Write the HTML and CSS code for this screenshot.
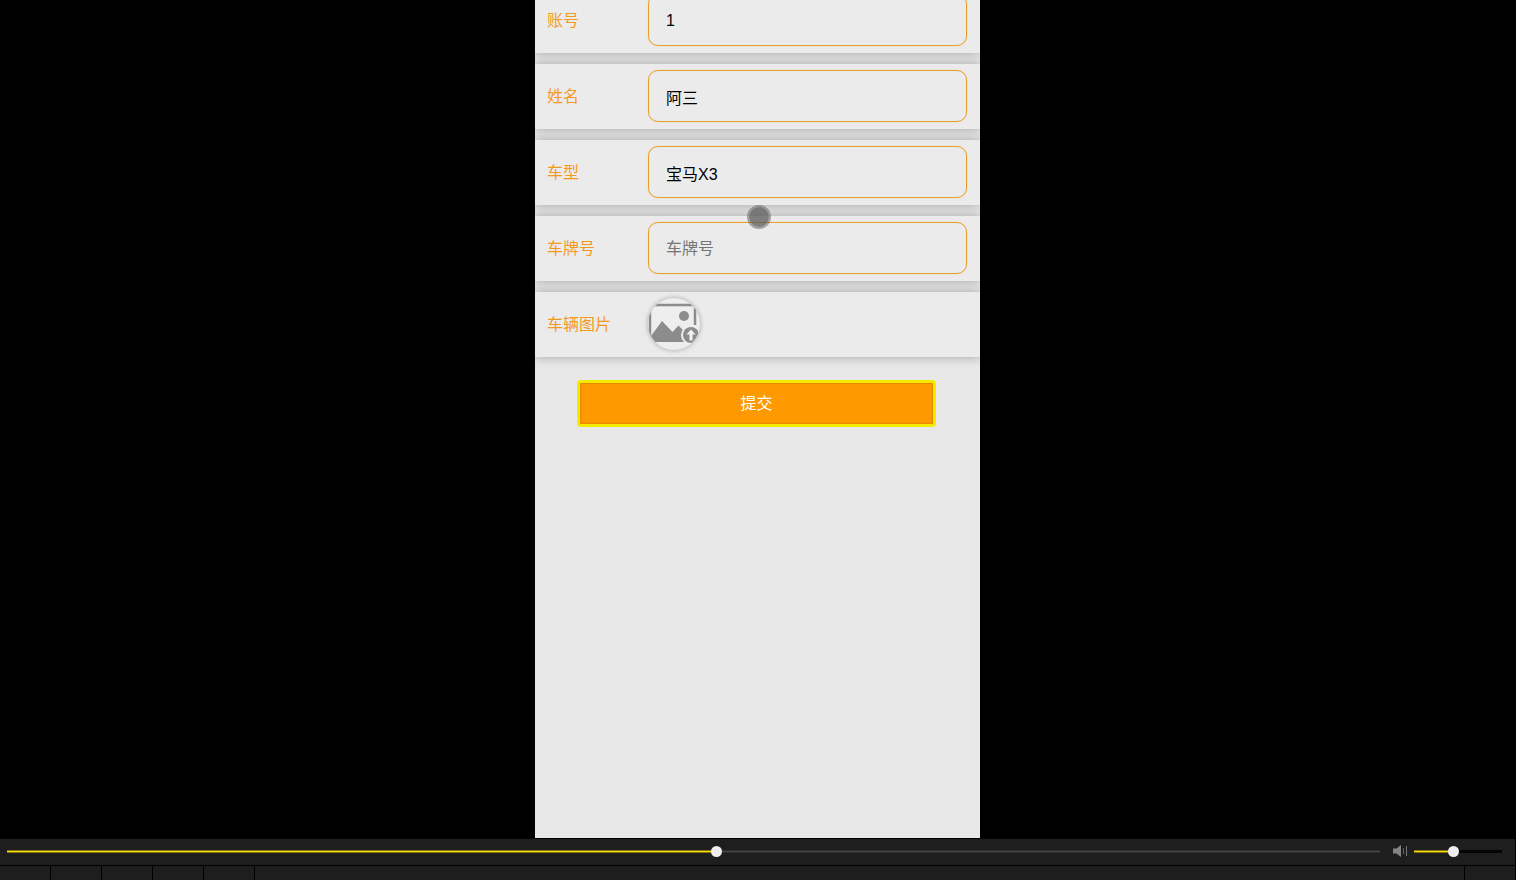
FILE: index.html
```html
<!DOCTYPE html>
<html lang="zh-CN">
<head>
<meta charset="utf-8">
<meta name="viewport" content="width=device-width, initial-scale=1">
<title>车辆信息</title>
<link rel="stylesheet" href="styles.css">
</head>
<body>
<main class="stage">
  <div class="phone">
    <form class="form">
      <div class="row">
        <label class="label" for="account">账号</label>
        <input class="field" id="account" type="text" value="1">
      </div>
      <div class="row">
        <label class="label" for="name">姓名</label>
        <input class="field" id="name" type="text" value="阿三">
      </div>
      <div class="row">
        <label class="label" for="model">车型</label>
        <input class="field" id="model" type="text" value="宝马X3">
      </div>
      <div class="row">
        <label class="label" for="plate">车牌号</label>
        <input class="field" id="plate" type="text" placeholder="车牌号">
      </div>
      <div class="row">
        <span class="label" id="photo-label">车辆图片</span>
        <button class="upload" type="button" aria-labelledby="photo-label">
          <svg class="upload-icon" viewBox="0 0 52 52" aria-hidden="true">
            <path d="M1 7h46v37H1z" fill="#eeeeee"/>
            <path d="M2 40V9q0-2 2-2h41q2 0 2 2v18" fill="none" stroke="#8c8c8c" stroke-width="2.500"/>
            <path d="M0 44V38h3L14 23 24.500 34l6-6.500 6 6v10.500z" fill="#8c8c8c"/>
            <circle cx="36" cy="18" r="5" fill="#8c8c8c"/>
            <circle cx="43" cy="37" r="10" fill="#eeeeee"/>
            <circle cx="43" cy="37" r="8" fill="#8c8c8c"/>
            <path d="M43 31.500l4.500 5h-3v6h-3v-6h-3z" fill="#f2f2f2"/>
          </svg>
        </button>
      </div>
      <button class="submit" type="button">提交</button>
    </form>
    <span class="touch"></span>
  </div>
</main>
<footer class="player">
  <div class="controls">
    <input class="slider seek" type="range" min="0" max="1000" value="517" aria-label="播放进度">
    <svg class="speaker" viewBox="0 0 16 14" aria-hidden="true">
      <path d="M1 4.500h3.500L9 1v12L4.500 9.500H1z" fill="#848484"/>
      <path d="M11.500 4v6" stroke="#606060"/>
      <path d="M14.500 2v10" stroke="#777777"/>
    </svg>
    <input class="slider volume" type="range" min="0" max="1000" value="445" aria-label="音量">
  </div>
  <div class="toolbar">
    <span class="cell"></span><span class="cell"></span><span class="cell"></span><span class="cell"></span><span class="cell"></span>
    <span class="cell cell-wide"></span><span class="cell"></span>
  </div>
</footer>
</body>
</html>
```
FILE: styles.css
```css
* {
  box-sizing: border-box;
}

body {
  margin: 0;
  height: 100vh;
  display: flex;
  flex-direction: column;
  overflow: hidden;
  background: #000000;
  font-family: "Liberation Sans", "Noto Sans CJK SC", sans-serif;
  font-size: 16px;
}

.stage {
  flex: 1;
  min-height: 0;
  display: flex;
  justify-content: center;
  padding-right: 1px;
}

.phone {
  position: relative;
  height: 100%;
  aspect-ratio: 445 / 838;
  overflow: hidden;
  background: #e8e8e8;
}

/* The list is scrolled slightly past its first row. */
.form {
  display: flex;
  flex-direction: column;
  gap: 11px;
  margin-top: -12px;
}

.row {
  display: flex;
  align-items: center;
  padding: 6px 13px 7px 12px;
  background: #ebebeb;
  box-shadow: 0 0 10px rgba(0, 0, 0, 0.3);
}

.label {
  width: 101px;
  flex: none;
  padding-top: 2px;
  line-height: 24px;
  color: #f39a1e;
}

.field {
  flex: 1;
  min-width: 0;
  height: 52px;
  padding: 2px 17px 0;
  border: 1px solid #e5a02a;
  border-radius: 10px;
  outline: none;
  background: transparent;
  box-shadow: 0 0 1px #f5bd55;
  font: inherit;
  color: #000000;
}

.field::placeholder {
  color: #757575;
  opacity: 1;
}

.upload {
  width: 52px;
  height: 52px;
  padding: 0;
  border: 0;
  border-radius: 50%;
  overflow: hidden;
  background: #eeeeee;
  box-shadow: 0 0 5px rgba(0, 0, 0, 0.3);
}

.upload-icon {
  display: block;
  width: 100%;
  height: 100%;
}

.submit {
  height: 47px;
  margin: 12px 44px 0 42px;
  padding: 0 0 4px;
  border: 3px solid #f3ea00;
  border-radius: 4px;
  background: #ff9900;
  box-shadow: inset 0 0 2px #a86400;
  font: inherit;
  color: #ffffff;
}

.touch {
  position: absolute;
  left: 212px;
  top: 205px;
  width: 24px;
  height: 24px;
  border: 2px solid rgba(90, 90, 90, 0.5);
  border-radius: 50%;
  background: rgba(90, 90, 90, 0.75);
  background-clip: padding-box;
  pointer-events: none;
}

.player {
  flex: none;
  padding: 1px 1px 0 0;
}

.controls {
  display: flex;
  align-items: center;
  height: 26px;
  padding: 0 13px 2px 7px;
  background: #1e1e1e;
}

.slider {
  appearance: none;
  height: 12px;
  margin: 0;
  outline: none;
  background: transparent;
}

.slider::-webkit-slider-runnable-track {
  height: 3px;
}

.slider::-webkit-slider-thumb {
  appearance: none;
  width: 11px;
  height: 11px;
  margin-top: -4px;
  border-radius: 50%;
  background: #eeeeee;
}

.seek {
  flex: 1;
  min-width: 0;
}

.seek::-webkit-slider-runnable-track {
  background:
    linear-gradient(#85750a 0 1px, #f5dc10 1px 2px, #85750a 2px) 0 0 / 51.7% 3px no-repeat,
    linear-gradient(#2c2c2c 0 1px, #484848 1px 2px, #2c2c2c 2px);
}

.volume {
  width: 88px;
}

.volume::-webkit-slider-runnable-track {
  background:
    linear-gradient(#85750a 0 1px, #f5dc10 1px 2px, #85750a 2px) 0 0 / 44.5% 3px no-repeat,
    #050505;
}

.speaker {
  width: 16px;
  height: 14px;
  margin: 0 6px 0 12px;
}

.toolbar {
  display: flex;
  gap: 1px;
  height: 14px;
  margin-top: 1px;
  overflow: hidden;
}

.cell {
  width: 50px;
  flex: none;
  background: #1e1e1e;
}

.cell-wide {
  flex: 1;
}
```
